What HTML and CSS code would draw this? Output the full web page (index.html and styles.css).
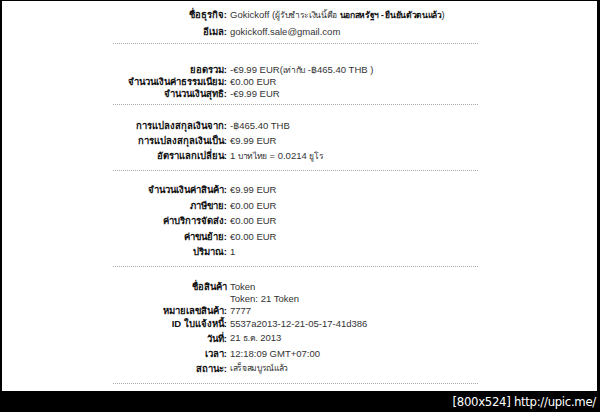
FILE: index.html
```html
<!DOCTYPE html>
<html lang="th">
<head>
<meta charset="utf-8">
<title>รายละเอียดการชำระเงิน</title>
<link rel="stylesheet" href="styles.css">
</head>
<body>
<div class="frame">
  <div class="sec s1">
    <div class="row"><div class="lbl">ชื่อธุรกิจ:</div><div class="val">Gokickoff (<span class="th">ผู้รับชำระเงินนี้คือ</span> <b class="th">นอกสหรัฐฯ - ยืนยันตัวตนแล้ว</b>)</div></div>
    <div class="row"><div class="lbl">อีเมล:</div><div class="val">gokickoff.sale@gmail.com</div></div>
  </div>
  <div class="rule r1"></div>
  <div class="sec s2">
    <div class="row"><div class="lbl">ยอดรวม:</div><div class="val">-€9.99 EUR(<span class="th">เท่ากับ</span> -฿465.40 THB )</div></div>
    <div class="row"><div class="lbl">จำนวนเงินค่าธรรมเนียม:</div><div class="val">€0.00 EUR</div></div>
    <div class="row"><div class="lbl">จำนวนเงินสุทธิ:</div><div class="val">-€9.99 EUR</div></div>
  </div>
  <div class="rule r2"></div>
  <div class="sec s3">
    <div class="row"><div class="lbl">การแปลงสกุลเงินจาก:</div><div class="val">-฿465.40 THB</div></div>
    <div class="row"><div class="lbl">การแปลงสกุลเงินเป็น:</div><div class="val">€9.99 EUR</div></div>
    <div class="row"><div class="lbl">อัตราแลกเปลี่ยน:</div><div class="val">1 <span class="th">บาทไทย</span> = 0.0214 <span class="th">ยูโร</span></div></div>
  </div>
  <div class="rule r3"></div>
  <div class="sec s4">
    <div class="row"><div class="lbl">จำนวนเงินค่าสินค้า:</div><div class="val">€9.99 EUR</div></div>
    <div class="row"><div class="lbl">ภาษีขาย:</div><div class="val">€0.00 EUR</div></div>
    <div class="row"><div class="lbl">ค่าบริการจัดส่ง:</div><div class="val">€0.00 EUR</div></div>
    <div class="row"><div class="lbl">ค่าขนย้าย:</div><div class="val">€0.00 EUR</div></div>
    <div class="row"><div class="lbl">ปริมาณ:</div><div class="val">1</div></div>
  </div>
  <div class="rule r4"></div>
  <div class="sec s5">
    <div class="row tight"><div class="lbl">ชื่อสินค้า</div><div class="val">Token<br>Token: 21 Token</div></div>
    <div class="row tight short"><div class="lbl">หมายเลขสินค้า:</div><div class="val">7777</div></div>
    <div class="row"><div class="lbl">ID ใบแจ้งหนี้:</div><div class="val">5537a2013-12-21-05-17-41d386</div></div>
    <div class="row"><div class="lbl">วันที่:</div><div class="val">21 <span class="th">ธ.ค.</span> 2013</div></div>
    <div class="row"><div class="lbl">เวลา:</div><div class="val">12:18:09 GMT+07:00</div></div>
    <div class="row"><div class="lbl">สถานะ:</div><div class="val"><span class="th">เสร็จสมบูรณ์แล้ว</span></div></div>
  </div>
  <div class="rule r5"></div>
</div>
<div class="bar">[800x524] http://upic.me/</div>
</body>
</html>
```
FILE: styles.css
```css
html, body {
  margin: 0;
  padding: 0;
  background: #000;
}
body {
  width: 600px;
  height: 412px;
  overflow: hidden;
  font-family: "Liberation Sans", "Noto Sans", "DejaVu Sans", sans-serif;
  font-size: 9.5px;
  color: #333;
}
.frame {
  margin: 1px 3px 0 2px;
  height: 390px;
  background: #fff;
  overflow: hidden;
}
.sec {
  display: flex;
  flex-direction: column;
}
.row {
  display: grid;
  grid-template-columns: 225px 1fr;
  column-gap: 3px;
  align-items: center;
}
.lbl {
  text-align: right;
  font-weight: bold;
  color: #111;
  white-space: nowrap;
}
.val {
  white-space: nowrap;
}
.val b {
  color: #111;
}
.th {
  font-size: 8.5px;
  letter-spacing: -0.35px;
}
.s1 { padding-top: 5px; }
.s1 .row { height: 17px; }
.s2 { padding-top: 18px; }
.s2 .row { height: 12px; }
.s3 { padding-top: 13px; }
.s3 .row { height: 15px; }
.s4 { padding-top: 11px; }
.s4 .row { height: 15.5px; }
.s5 { padding-top: 14px; }
.s5 .row { height: 15px; }
.s5 .row.tight { height: auto; align-items: start; line-height: 12px; }
.s5 .row.short { height: 11px; line-height: 11px; }
.rule {
  margin-left: 111px;
  width: 365px;
  height: 1px;
  background-image: linear-gradient(to right, #a8a8a8 0 1px, transparent 1px 2px);
  background-size: 2px 1px;
}
.r1 { margin-top: 3px; }
.r2 { margin-top: 6px; }
.r3 { margin-top: 7px; }
.r4 { margin-top: 6px; }
.r5 { margin-top: 7px; }
.bar {
  height: 21px;
  color: #fff;
  text-align: right;
  padding-right: 4px;
  font-family: "DejaVu Sans Condensed", "DejaVu Sans", sans-serif;
  font-stretch: condensed;
  font-size: 13px;
  letter-spacing: -0.3px;
  line-height: 21px;
}
```
